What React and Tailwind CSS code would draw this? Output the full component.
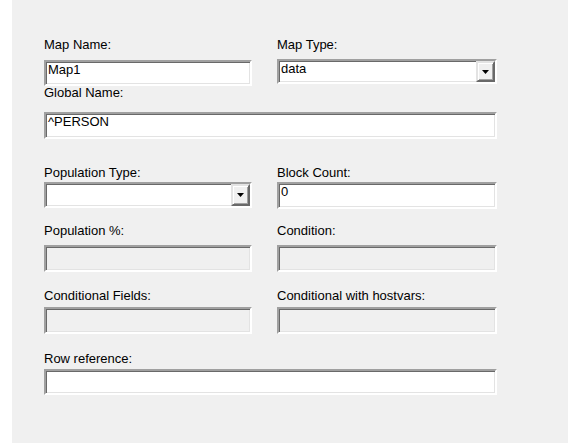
import React from 'react'

const SUNKEN = 'border-2 border-t-[#a0a0a0] border-l-[#a0a0a0] border-b-white border-r-white shadow-[inset_1px_1px_0_#696969,inset_-1px_-1px_0_#e3e3e3]'
const RAISED = 'border-2 border-t-[#e3e3e3] border-l-[#e3e3e3] border-b-[#696969] border-r-[#696969] shadow-[inset_1px_1px_0_#ffffff,inset_-1px_-1px_0_#a0a0a0]'

// ── Label ────────────────────────────────────────────────────────────────
function Label({ children, className = '' }) {
  return <div className={`h-[15px] leading-[15px] whitespace-nowrap ${className}`}>{children}</div>
}

// ── Text box ─────────────────────────────────────────────────────────────
function TextBox({ value = '', disabled, className = '' }) {
  return (
    <div className={`${SUNKEN} ${disabled ? 'bg-[#f0f0f0]' : 'bg-white'} pl-[2px] leading-[15px] ${className}`}>
      {value}
    </div>
  )
}

// ── Combo box ────────────────────────────────────────────────────────────
function ComboBox({ value = '', className = '' }) {
  return (
    <div className={`${SUNKEN} bg-white flex items-stretch ${className}`}>
      <div className="flex-1 pl-[2px] leading-[15px]">{value}</div>
      <div className={`${RAISED} bg-[#f0f0f0] w-[19px] flex items-center justify-center`}>
        <svg width="7" height="4" viewBox="0 0 7 4"><path d="M0 0h7L3.5 4z" fill="#000" /></svg>
      </div>
    </div>
  )
}

export default function App() {
  return (
    <div className="h-[443px] bg-white flex text-[13px] text-black" style={{ fontFamily: '"Liberation Sans", Arial, sans-serif' }}>
      <div className="ml-[12px] w-[556px] bg-[#f0f0f0] pl-[32px] pt-[37px]">
        {/* Map name / type */}
        <div className="grid grid-cols-[208px_220px] gap-x-[25px]">
          <div>
            <Label>Map Name:</Label>
            <TextBox value="Map1" className="mt-[8px] h-[26px]" />
          </div>
          <div>
            <Label>Map Type:</Label>
            <ComboBox value="data" className="mt-[7px] h-[25px]" />
          </div>
        </div>

        {/* Global name */}
        <Label className="-mt-[1px]">Global Name:</Label>
        <TextBox value="^PERSON" className="mt-[12px] h-[27px] w-[453px]" />

        {/* Population / block count */}
        <div className="grid grid-cols-[208px_220px] gap-x-[25px] mt-[26px]">
          <div>
            <Label>Population Type:</Label>
            <ComboBox className="mt-[2px] h-[26px]" />
          </div>
          <div>
            <Label>Block Count:</Label>
            <TextBox value="0" className="mt-[2px] h-[27px]" />
          </div>
        </div>

        {/* Population % / condition */}
        <div className="grid grid-cols-[208px_220px] gap-x-[25px] mt-[14px]">
          <div>
            <Label>Population %:</Label>
            <TextBox disabled className="mt-[7px] h-[27px]" />
          </div>
          <div>
            <Label>Condition:</Label>
            <TextBox disabled className="mt-[7px] h-[27px]" />
          </div>
        </div>

        {/* Conditional fields */}
        <div className="grid grid-cols-[208px_220px] gap-x-[25px] mt-[16px]">
          <div>
            <Label>Conditional Fields:</Label>
            <TextBox disabled className="mt-[4px] h-[27px]" />
          </div>
          <div>
            <Label>Conditional with hostvars:</Label>
            <TextBox disabled className="mt-[4px] h-[27px]" />
          </div>
        </div>

        {/* Row reference */}
        <Label className="mt-[17px]">Row reference:</Label>
        <TextBox className="mt-[3px] h-[26px] w-[453px]" />
      </div>
    </div>
  )
}
